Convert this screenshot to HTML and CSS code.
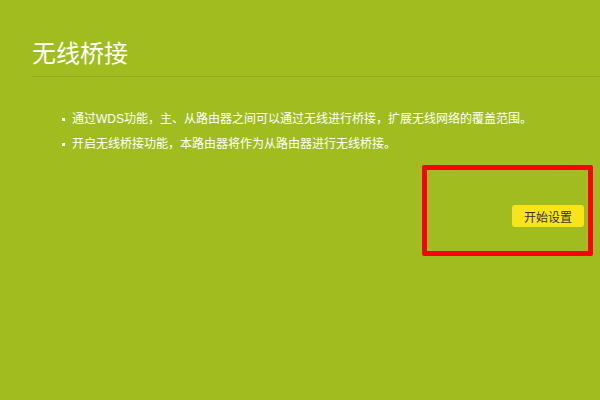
FILE: index.html
```html
<!DOCTYPE html>
<html lang="zh">
<head>
<meta charset="utf-8">
<link rel="stylesheet" href="styles.css">
</head>
<body>
<div class="page">
  <h1 class="title">无线桥接</h1>
  <ul class="notes">
    <li>通过WDS功能，主、从路由器之间可以通过无线进行桥接，扩展无线网络的覆盖范围。</li>
    <li>开启无线桥接功能，本路由器将作为从路由器进行无线桥接。</li>
  </ul>
  <div class="actions">
    <div class="highlight">
      <button class="start">开始设置</button>
    </div>
  </div>
</div>
</body>
</html>
```
FILE: styles.css
```css
html, body {
  margin: 0;
  padding: 0;
  background: #a0bc1e;
  width: 600px;
  height: 400px;
  overflow: hidden;
  font-family: "Liberation Sans", "Noto Sans CJK SC", sans-serif;
}
.page {
  padding: 37px 0 0 32px;
}
.title {
  margin: 0;
  font-weight: normal;
  font-size: 24px;
  line-height: 34px;
  color: #fff;
  padding-bottom: 5px;
  border-bottom: 1px solid #93ad1a;
}
.notes {
  list-style: none;
  margin: 0;
  padding: 30px 0 0 30px;
}
.notes li {
  position: relative;
  font-size: 12px;
  line-height: 25px;
  color: #fff;
  padding-left: 10px;
}
.notes li::before {
  content: "";
  position: absolute;
  left: 0;
  top: 11px;
  width: 3px;
  height: 3px;
  background: #fff;
}
.actions {
  display: flex;
  justify-content: flex-end;
  padding: 8px 7px 0 0;
}
.highlight {
  box-sizing: border-box;
  width: 171px;
  height: 91px;
  border: 5px solid #ff0000;
  border-radius: 2px;
  display: flex;
  justify-content: flex-end;
  align-items: flex-start;
  padding: 35px 4px 0 0;
}
.start {
  background: #f7e51a;
  border: none;
  border-radius: 3px;
  height: 22px;
  width: 72px;
  padding: 0;
  font-family: "Liberation Sans", "Noto Sans CJK SC", sans-serif;
  font-size: 12px;
  color: #333;
}
```
